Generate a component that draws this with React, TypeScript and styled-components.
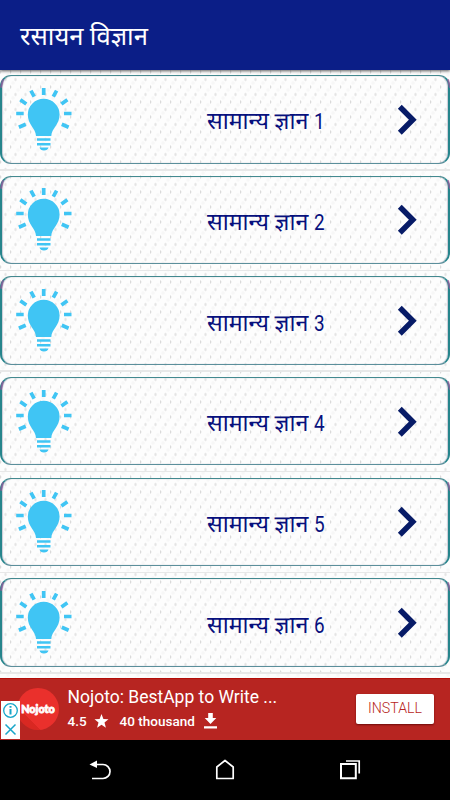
import React from 'react';
import styled, { createGlobalStyle } from 'styled-components';

const Global = createGlobalStyle`
  * { box-sizing: border-box; }
  body { margin: 0; overflow: hidden; background: #000; }
`;

const Screen = styled.div`
  width: 450px;
  height: 800px;
  display: flex;
  flex-direction: column;
  font-family: Roboto, "Noto Sans Devanagari", "Noto Sans", sans-serif;
`;

const Header = styled.header`
  flex: none;
  height: 70px;
  padding: 2px 0 0 20px;
  display: flex;
  align-items: center;
  background: #0b1e87;
  box-shadow: 0 1px 3px rgba(0, 0, 0, 0.65);
  z-index: 1;
`;

const Title = styled.h1`
  margin: 0;
  color: #fff;
  font-size: 25.6px;
  font-weight: 400;
  line-height: 40px;
  white-space: nowrap;
`;

const List = styled.main`
  flex: none;
  height: 608px;
  padding-top: 5px;
  overflow: hidden;
  background-color: #fdfdfd;
  background-image:
    radial-gradient(ellipse 1.2px 2.2px at 0.5px 2px, #dadada 40%, transparent 100%),
    radial-gradient(ellipse 1.6px 2.2px at 5.5px 9.5px, #e4e4e4 40%, transparent 100%),
    radial-gradient(circle 2.5px at 8px 5px, #f7f7f7 40%, transparent 100%),
    radial-gradient(circle 2.5px at 3px 13px, #f7f7f7 40%, transparent 100%);
  background-size: 10px 15px;
`;

const Row = styled.div`
  height: 100.67px;
  display: flex;
  flex-direction: column;
`;

const Card = styled.button`
  position: relative;
  width: 450px;
  height: 88.5px;
  padding: 0;
  display: grid;
  grid-template-columns: 80px 1fr 52px;
  align-items: center;
  justify-items: start;
  border: solid #43898f;
  border-width: 1px 2px;
  border-color: #43898f #26858c #5b8f9b;
  border-radius: 11px;
  background: transparent;
  box-shadow: inset 1px 0 1px #c9cbd6, inset -1px 0 1px #c9cbd6;
  font-family: inherit;

  &::before,
  &::after {
    content: '';
    position: absolute;
    top: 3px;
    width: 2px;
    height: 9px;
    border-radius: 2px;
    background: rgba(150, 90, 155, 0.75);
  }
  &::before { left: -1.5px; transform: rotate(14deg); }
  &::after { right: -1.5px; transform: rotate(-14deg); }
`;

const Divider = styled.div`
  height: 1.5px;
  margin-top: 5.5px;
  background: #e8e8e8;
`;

const Label = styled.span`
  padding: 5px 0 0 125px;
  color: #07107d;
  font-size: 23.2px;
  font-weight: 400;
  line-height: 30px;
  white-space: nowrap;
`;

const Digit = styled.span`
  display: inline-block;
  font-size: 22px;
  font-weight: 400;
  transform: scaleX(0.86);
  transform-origin: left;
`;

const BulbIcon = styled.svg`
  margin: 1px 0 0 12px;
`;

const Bulb = () => (
  <BulbIcon width="60" height="68" viewBox="14 86 60 68">
    <g fill="#40c5f4">
      <path d="M36 136c-.3-8-8.200-11-8.200-21.500a15.900 15.700 0 0 1 31.800 0c0 10.500-8 13.500-8.300 21.500z" />
      <path d="M37 138.300h13.500v2.500H37zM37 143h13.500v2.500H37zM39.500 147.500h9c-.5 2-2 3-4.500 3s-4-1-4.500-3z" />
    </g>
    <path
      d="M43.700 95v-7M34.200 96.700l-3.300-6M53.300 96.700l3.300-6M26.300 104l-6-4.300M61.400 104l6-4.300M23.700 113.500h-7.500M64 113.500h7.500M25.700 124.300l-6.800 3M61.800 124.300l6.800 3"
      stroke="#40c5f4" strokeWidth="3.700" fill="none"
    />
  </BulbIcon>
);

const ChevronIcon = styled.svg`
  margin-top: 1px;
`;

const Chevron = () => (
  <ChevronIcon width="24" height="34" viewBox="0 0 24 34">
    <path d="M3.800 3.800l13 13L3.800 29.800" stroke="#071b67" strokeWidth="5.500" fill="none" />
  </ChevronIcon>
);

const Ad = styled.aside`
  position: relative;
  flex: none;
  height: 62px;
  padding: 0 16px 0 17px;
  display: flex;
  align-items: center;
  background: #b72521;
  border-top: 1px solid #b40d08;
  color: #fff;
`;

const Logo = styled.div`
  flex: none;
  width: 42px;
  height: 42px;
  margin-top: -2px;
  border-radius: 50%;
  display: flex;
  align-items: center;
  justify-content: center;
  background: linear-gradient(45deg, #d92822 0 28%, #ea302c 28%);
  font: 900 10.8px Lato, sans-serif;
  -webkit-text-stroke: 0.8px #fff;
`;

const AdText = styled.div`
  flex: 1;
  margin: -1px 0 0 8.5px;
`;

const AdTitle = styled.div`
  font-size: 17.5px;
  line-height: 23px;
  white-space: nowrap;
`;

const AdMeta = styled.div`
  display: flex;
  align-items: center;
  height: 24px;
  font-size: 13.5px;
  font-weight: 500;
`;

const StarIcon = styled.svg`
  margin: 1px 11px 0 7px;
`;

const DownloadIcon = styled.svg`
  margin: 1px 0 0 8px;
`;

const Install = styled.button`
  width: 78px;
  height: 30px;
  margin-top: -1px;
  padding: 0 0 2px;
  border: 0;
  border-radius: 2px;
  background: #fff;
  color: #b72521;
  font: 300 14.2px Roboto, sans-serif;
  box-shadow: 0 1px 2px rgba(80, 0, 0, 0.7);
`;

const AdChoices = styled.div`
  position: absolute;
  left: 1px;
  bottom: 1px;
  width: 19px;
  height: 38px;
  background: #fff;
`;

const Nav = styled.nav`
  height: 60px;
  padding: 0 89px;
  display: flex;
  align-items: center;
  justify-content: space-between;
  background: #000;
`;

const labels = [1, 2, 3, 4, 5, 6];

export default function App() {
  return (
    <Screen>
      <Global />
      <Header><Title>रसायन विज्ञान</Title></Header>
      <List>
        {labels.map((n) => (
          <Row key={n}>
            <Card>
              <Bulb />
              <Label>सामान्य ज्ञान <Digit>{n}</Digit></Label>
              <Chevron />
            </Card>
            <Divider />
          </Row>
        ))}
      </List>
      <Ad>
        <Logo>Nojoto</Logo>
        <AdText>
          <AdTitle>Nojoto: BestApp to Write ...</AdTitle>
          <AdMeta>
            4.5
            <StarIcon width="15" height="14" viewBox="0 0 15 14">
              <path d="M7.500 0l1.900 4.900 5.100.3-4 3.300 1.400 5.200-4.400-2.900-4.400 2.900 1.400-5.200-4-3.300 5.100-.3z" fill="#fff" />
            </StarIcon>
            40 thousand
            <DownloadIcon width="15" height="16" viewBox="0 0 15 16">
              <path d="M5.200 0h4.600v5h3.500L7.500 11 1.700 5h3.500zM1 13.200h13v2.300H1z" fill="#fff" />
            </DownloadIcon>
          </AdMeta>
        </AdText>
        <Install>INSTALL</Install>
        <AdChoices>
          <svg width="19" height="38" viewBox="0 0 19 38" fill="none" stroke="#17a6c9">
            <circle cx="9.500" cy="9.500" r="6.800" strokeWidth="1.300" />
            <path d="M9.500 8v5.500M9.500 5v1.800" strokeWidth="2" />
            <path d="M4.500 23.500l10 10M14.500 23.500l-10 10" strokeWidth="1.500" />
          </svg>
        </AdChoices>
      </Ad>
      <Nav>
        <svg width="22" height="22" viewBox="0 0 22 22">
          <path d="M6 5.500h8a6.700 6.700 0 0 1 0 14H3" stroke="#fff" strokeWidth="1.700" fill="none" />
          <path d="M.500 5.500L8 1.500v7.500z" fill="#fff" />
        </svg>
        <svg width="20" height="22" viewBox="0 0 20 22">
          <path d="M1.800 8L10 1.500 18.200 8v11.500H1.800z" stroke="#fff" strokeWidth="1.700" fill="none" strokeLinejoin="round" />
        </svg>
        <svg width="22" height="22" viewBox="0 0 22 22" fill="none" stroke="#fff">
          <path d="M2 5h14.800v14.200H2z" strokeWidth="2" />
          <path d="M7 2h13.200v12.500" strokeWidth="1.700" />
        </svg>
      </Nav>
    </Screen>
  );
}
